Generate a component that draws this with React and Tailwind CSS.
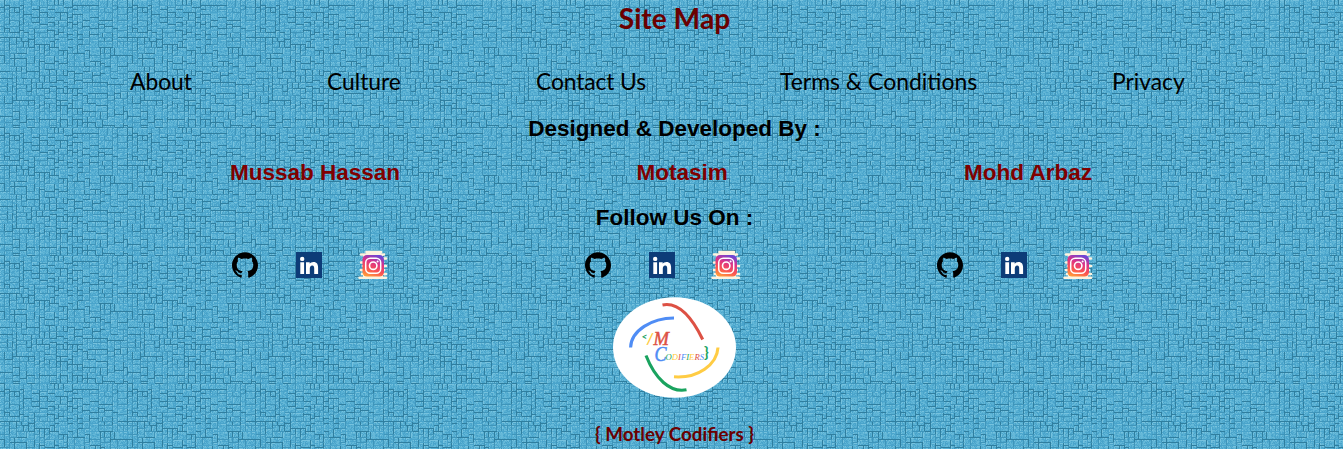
import React from "react";
import { SiGithub } from "react-icons/si";

const TILE = 128;
const UNITS = 52;

function makeRandom(seed) {
  let s = seed;
  return () => {
    s = (s * 1664525 + 1013904223) % 4294967296;
    return s / 4294967296;
  };
}

// Maps each pixel of the tile to a lattice unit two or three pixels wide.
function makeAxis(rnd) {
  const sizes = new Array(UNITS).fill(2);
  let extra = TILE - UNITS * 2;
  while (extra > 0) {
    const i = Math.floor(rnd() * UNITS);
    if (sizes[i] === 2) {
      sizes[i] = 3;
      extra--;
    }
  }
  return sizes.flatMap((n, i) => new Array(n).fill(i));
}

// Builds a seamless tile of small raised bricks: a dark edge with a light edge beside it.
function buildTile() {
  const rnd = makeRandom(29);
  const ax = makeAxis(rnd);
  const ay = makeAxis(rnd);
  const cells = new Int32Array(UNITS * UNITS).fill(-1);
  const cell = (u, v) => (v % UNITS) * UNITS + (u % UNITS);
  let id = 0;
  for (let v = 0; v < UNITS; v++) {
    for (let u = 0; u < UNITS; u++) {
      if (cells[cell(u, v)] !== -1) continue;
      let w = 2 + Math.floor(rnd() * 2.3);
      const h = 2 + Math.floor(rnd() * 1.9);
      let free = 0;
      while (free < 6 && cells[cell(u + free, v)] === -1) free++;
      if (free - w === 1) w = free;
      w = Math.min(w, free);
      for (let j = 0; j < h; j++)
        for (let i = 0; i < w; i++) {
          if (cells[cell(u + i, v + j)] !== -1) break;
          cells[cell(u + i, v + j)] = id;
        }
      id++;
    }
  }
  const owner = (x, y) => cells[cell(ax[(x + TILE) % TILE], ay[(y + TILE) % TILE])];
  const out = { dark: "", mid: "", light: "", soft: "", shade: "" };
  for (let y = 0; y < TILE; y++) {
    for (let x = 0; x < TILE; x++) {
      const o = owner(x, y);
      const px = `M${x} ${y}h1v1h-1z`;
      const right = owner(x + 1, y) !== o;
      const below = owner(x, y + 1) !== o;
      const rim = owner(x - 1, y) !== o || owner(x, y - 1) !== o;
      const r = rnd();
      if (right || below) {
        const v = (o * 7919 + (below ? 3 : 0)) % 10;
        if (v < 4) out.dark += px;
        else if (v < 8) out.mid += px;
        else out.shade += px;
      } else if (rim && r < 0.5) out.light += px;
      else if (r < 0.3) out.soft += px;
      else if (r < 0.64) out.shade += px;
    }
  }
  return out;
}

const tile = buildTile();

function Texture() {
  return (
    <svg className="absolute inset-0 h-full w-full" shapeRendering="crispEdges" aria-hidden="true">
      <defs>
        <pattern id="bricks" width={TILE} height={TILE} patternUnits="userSpaceOnUse">
          <rect width={TILE} height={TILE} fill="#58b0d3" />
          <path d={tile.shade} fill="#4aa4cb" />
          <path d={tile.soft} fill="#65b8d8" />
          <path d={tile.light} fill="#76c2de" />
          <path d={tile.mid} fill="#3f95ba" />
          <path d={tile.dark} fill="#2f7e9f" />
        </pattern>
      </defs>
      <rect width="100%" height="100%" fill="url(#bricks)" />
    </svg>
  );
}

function LinkedIn() {
  return (
    <svg className="h-[26px] w-[26px]" viewBox="0 0 26 26">
      <rect width="26" height="26" fill="#0d3c78" />
      <g fill="#fff">
        <circle cx="6.2" cy="6.9" r="2.2" />
        <path d="M4.3 10.2h3.8V22H4.3zM10 10.2h3.7v1.6c.7-1.2 2-1.9 3.7-1.9 3.6 0 4.7 2.3 4.7 5.8V22h-3.9v-5.5c0-1.8-.3-3.1-2-3.1s-2.4 1.3-2.4 3.2V22H10z" />
      </g>
    </svg>
  );
}

function Instagram({ id }) {
  return (
    <svg className="h-[30px] w-[30px]" viewBox="0 0 30 30">
      <defs>
        <linearGradient id={id} x1="0.3" y1="1" x2="0.65" y2="0">
          <stop offset="0" stopColor="#ff9a3c" />
          <stop offset="0.3" stopColor="#fb5550" />
          <stop offset="0.65" stopColor="#dc3287" />
          <stop offset="1" stopColor="#6b45d6" />
        </linearGradient>
      </defs>
      <path d="M8.5 2H23M3 4.5H26M6 8.5H28M3 12.5H25M5 16H28M3 20H26M4 24H28M1.5 27.8H28" stroke="#fdf3df" strokeWidth="2.6" strokeLinecap="round" />
      <rect x="5" y="5" width="20" height="22" fill="#fdf3df" />
      <rect x="4.5" y="5" width="21.5" height="21.5" rx="4.5" fill={`url(#${id})`} />
      <rect x="7.7" y="8.2" width="15" height="15" rx="4.5" fill="none" stroke="#fff" strokeWidth="1.5" />
      <circle cx="15.2" cy="15.7" r="3.7" fill="none" stroke="#fff" strokeWidth="1.6" />
      <circle cx="19.6" cy="11.4" r="1" fill="#fff" />
    </svg>
  );
}

function Socials({ id }) {
  return (
    <div className="flex w-[156px] items-center">
      <SiGithub className="mr-[38px] h-[26px] w-[26px] text-black" />
      <LinkedIn />
      <div className="ml-9">
        <Instagram id={id} />
      </div>
    </div>
  );
}

function Logo() {
  return (
    <svg className="h-[101px] w-[123px]" viewBox="13 7.5 123 101">
      <ellipse cx="74.5" cy="58" rx="61.5" ry="50.3" fill="#fff" />
      <g fill="none" strokeWidth="3.1">
        <path d="M62.5 15.5C77 12.5 91 26 102.7 50" stroke="#dd5144" />
        <path d="M30.6 58C31 41 52 28.5 74 28.5" stroke="#4f8df5" />
        <path d="M46 66C55 89 70 103.5 86.5 100.3" stroke="#1aa35f" />
        <path d="M74 87.3C98 89 117 75 118 58" stroke="#ffcc44" />
      </g>
      <g fontFamily="'Liberation Serif', serif" fontStyle="italic">
        <text x="41.5" y="50" fontSize="10" fontWeight="700" fontFamily="Lato, sans-serif" fill="#1aa35f">&lt;</text>
        <text x="46.8" y="54" fontSize="15" fontWeight="700" fontFamily="Lato, sans-serif" fill="#ffcc44">/</text>
        <text x="53.5" y="55" fontSize="18.5" strokeWidth="0.5" stroke="#dd5144" fill="#dd5144" textLength="15.5" lengthAdjust="spacingAndGlyphs">M</text>
        <text x="54.5" y="71" fontSize="20" strokeWidth="0.5" stroke="#4f8df5" fill="#4f8df5" textLength="12" lengthAdjust="spacingAndGlyphs">C</text>
        <text x="65.5" y="70" fontSize="9" textLength="38.5" lengthAdjust="spacingAndGlyphs">
          <tspan fill="#1aa35f">O</tspan><tspan fill="#ffcc44">D</tspan><tspan fill="#dd5144">I</tspan><tspan fill="#4f8df5">F</tspan><tspan fill="#1aa35f">I</tspan><tspan fill="#ffcc44">E</tspan><tspan fill="#dd5144">R</tspan><tspan fill="#4f8df5">S</tspan>
        </text>
        <text x="104" y="67.5" fontSize="15.5" fontStyle="normal" fontFamily="Lato, sans-serif" fontWeight="700" fill="#1aa35f">{"}"}</text>
      </g>
    </svg>
  );
}

export default function App() {
  return (
    <footer className="relative h-[449px] w-full overflow-hidden font-['Liberation_Sans',sans-serif] text-black">
      <Texture />
      <div className="relative flex h-full flex-col">
        <h2 className="mt-px pl-1.5 text-center font-['Lato',sans-serif] text-[28.2px] leading-[34px] font-bold text-[#6b0000]">Site Map</h2>
        <nav className="mt-[30px] flex gap-[135px] pl-[130px] font-['Lato',sans-serif] text-[22.8px] leading-8 whitespace-nowrap">
          <a className="w-[62px]">About</a>
          <a className="w-[74px]">Culture</a>
          <a className="w-[109px] tracking-[-0.1px]">Contact Us</a>
          <a className="w-[197px] text-[22.95px]">Terms &amp; Conditions</a>
          <a className="w-[72px]">Privacy</a>
        </nav>
        <h3 className="mt-4 pl-1.5 text-center text-[22.5px] leading-8 font-bold">Designed &amp; Developed By :</h3>
        <div className="mt-3 flex gap-[236.5px] pl-[230px] text-[22.5px] leading-8 font-bold whitespace-nowrap text-[#800000]">
          <span className="w-[170px]">Mussab Hassan</span>
          <span className="w-[91px]">Motasim</span>
          <span className="w-32">Mohd Arbaz</span>
        </div>
        <h3 className="mt-[13px] pl-1.5 text-center text-[22.5px] leading-8 font-bold">Follow Us On :</h3>
        <div className="mt-4 flex gap-[196.5px] pl-[232px]">
          <Socials id="insta-a" />
          <Socials id="insta-b" />
          <Socials id="insta-c" />
        </div>
        <div className="mt-[17px] flex justify-center pl-1.5">
          <Logo />
        </div>
        <p className="mt-6 pl-1.5 text-center font-['Lato',sans-serif] text-[18.8px] leading-6 font-bold text-[#6b0000]">{"{ Motley Codifiers }"}</p>
      </div>
    </footer>
  );
}
